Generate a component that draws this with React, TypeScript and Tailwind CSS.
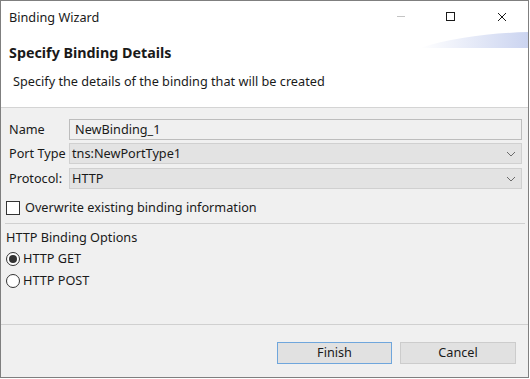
import React from "react";

function Chevron() {
  return (
    <svg width="10" height="6" viewBox="0 0 10 6" className="absolute right-[5px] top-1/2 -translate-y-1/2">
      <path d="M1 1 L5 5 L9 1" fill="none" stroke="#6b6b6b" strokeWidth="1" />
    </svg>
  );
}

function Radio({ checked, label }: { checked?: boolean; label: string }) {
  return (
    <div className="flex h-[16px] items-center">
      <span className="flex h-[14px] w-[14px] items-center justify-center rounded-full border border-[#333] bg-white ml-[5px]">
        {checked && <span className="h-[8px] w-[8px] rounded-full bg-[#333]" />}
      </span>
      <span className="ml-[3px]">{label}</span>
    </div>
  );
}

export default function App() {
  return (
    <div className="h-[379px] w-[530px] bg-white font-['Noto_Sans',sans-serif] text-[12.7px] text-[#1a1a1a]">
      <div className="flex h-[378px] w-[529px] flex-col border border-[#7f7f7f]">
        {/* Title bar */}
        <div className="flex h-[31px] items-center bg-white">
          <span className="pl-[8px] pt-[2px]">Binding Wizard</span>
          <div className="ml-auto flex h-full">
            <div className="flex w-[52px] items-center justify-center">
              <span className="ml-[6px] h-px w-[8px] bg-[#c4c4c4]" />
            </div>
            <div className="flex w-[52px] items-center justify-center">
              <span className="h-[9px] w-[9px] border border-[#1a1a1a]" />
            </div>
            <div className="flex w-[52px] items-center justify-center">
              <svg width="10" height="10" viewBox="0 0 10 10">
                <path d="M1 1 L9 9 M9 1 L1 9" stroke="#1a1a1a" strokeWidth="1" />
              </svg>
            </div>
          </div>
        </div>

        {/* Header */}
        <div className="relative h-[76px] border-b border-[#d4d4d4] bg-white">
          <svg className="absolute right-0 top-0" width="108" height="17" viewBox="0 0 108 17">
            <defs>
              <linearGradient id="g" x1="0" x2="1" y1="0" y2="0">
                <stop offset="0" stopColor="#ffffff" />
                <stop offset="1" stopColor="#cbd4f0" />
              </linearGradient>
            </defs>
            <path d="M0 16 C30 6 70 1 108 0 L108 16 Z" fill="url(#g)" />
          </svg>
          <div className="pl-[8px] pt-[12px] text-[14.3px] font-bold leading-[18px]">Specify Binding Details</div>
          <div className="pl-[12px] pt-[11px] leading-[16px]">Specify the details of the binding that will be created</div>
        </div>

        {/* Body */}
        <div className="flex flex-1 flex-col bg-[#f0f0f0]">
          <div className="flex flex-col gap-[3px] pl-[8px] pr-[6px] pt-[11px]">
            <div className="flex h-[21px] items-center">
              <span className="w-[60px]">Name</span>
              <div className="flex h-full flex-1 items-center border border-[#bdbdbd] bg-[#f0f0f0] pl-[5px]">NewBinding_1</div>
            </div>
            <div className="flex h-[21px] items-center">
              <span className="w-[60px]">Port Type</span>
              <div className="relative flex h-full flex-1 items-center border border-[#d0d0d0] bg-[#e3e3e3] pl-[2px]">
                tns:NewPortType1
                <Chevron />
              </div>
            </div>
            <div className="mt-[1px] flex h-[21px] items-center">
              <span className="w-[60px]">Protocol:</span>
              <div className="relative flex h-full flex-1 items-center border border-[#d0d0d0] bg-[#e3e3e3] pl-[2px]">
                HTTP
                <Chevron />
              </div>
            </div>
          </div>

          <div className="mt-[11px] flex h-[16px] items-center">
            <span className="ml-[5px] h-[14px] w-[14px] border border-[#333] bg-white" />
            <span className="ml-[5px]">Overwrite existing binding information</span>
          </div>

          <div className="ml-[4px] mr-[3px] mt-[7px] h-px bg-[#d0d0d0]" />

          <div className="mt-[6px] flex h-[16px] items-center pl-[5px]">HTTP Binding Options</div>
          <div className="mt-[5px]">
            <Radio checked label="HTTP GET" />
          </div>
          <div className="mt-[6px]">
            <Radio label="HTTP POST" />
          </div>

          <div className="mt-auto h-px bg-[#d0d0d0]" />
          <div className="flex h-[52px] justify-end gap-[8px] pr-[12px] pt-[17px]">
            <button className="h-[22px] w-[115px] border border-[#6fa6dc] bg-[#e1e1e1]">Finish</button>
            <button className="h-[22px] w-[116px] border border-[#cccccc] bg-[#e1e1e1]">Cancel</button>
          </div>
        </div>
      </div>
    </div>
  );
}
